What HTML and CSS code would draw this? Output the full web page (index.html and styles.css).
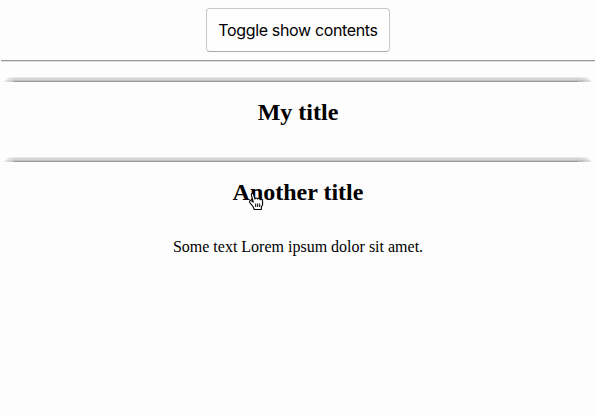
FILE: index.html
```html
<!DOCTYPE html>
<html lang="en">
<head>
<meta charset="utf-8">
<title>Toggle contents</title>
<link rel="stylesheet" href="styles.css">
</head>
<body>
<button class="toggle" type="button">Toggle show contents</button>
<hr class="rule">
<section class="panel">
  <h2 class="title">My title</h2>
</section>
<section class="panel">
  <h2 class="title">Another title</h2>
  <p class="description">Some text Lorem ipsum dolor sit amet.</p>
</section>
<svg class="pointer" width="16" height="20" viewBox="0 0 16 20" aria-hidden="true">
  <path d="M5.2 17.5 4 14.5 1 10.8C-.3 8.8 1.5 7.8 3 9L4.3 10.2 2.4 3.2C1.9 1.2 4 .8 4.6 2.6L6 7C6.4 5.7 8 5.8 8.5 7 9.3 6 10.8 6.4 11.1 7.7 12.2 7 13.5 7.7 13.6 9.2L13.6 12.5 12.4 15.2 12.3 17.5Z" fill="#fff" stroke="#000" stroke-width="1.1" stroke-linejoin="round"/>
  <path d="M6.7 11.5v3.5M8.7 11.5v3.5M10.7 11.5v3.5" stroke="#000" stroke-width="1"/>
</svg>
</body>
</html>
```
FILE: styles.css
```css
body {
  min-height: 407px;
  margin: 0;
  padding-top: 8px;
  background: #fdfdfd;
  color: #000;
  font-family: "Liberation Serif", "Times New Roman", serif;
  font-size: 16px;
  text-align: center;
}

.toggle {
  display: block;
  box-sizing: border-box;
  width: 184px;
  height: 44px;
  margin: 0 auto;
  padding: 0;
  border: 1px solid #c8c8c8;
  border-bottom-color: #aaa;
  border-radius: 4px;
  background: #fefefe;
  color: #000;
  font: 16px/20px Inter, sans-serif;
  letter-spacing: -0.35px;
}

.rule {
  height: 1px;
  margin: 8px 1px 15px;
  border: 0;
  border-top: 1px solid #999;
  background: #e0e0e0;
}

.panel {
  min-height: 80px;
}

.panel::before {
  content: "";
  display: block;
  height: 5px;
  margin: 0 4px;
  background:
    linear-gradient(#999, #999) 10px 4px / calc(100% - 24px) 1px no-repeat,
    linear-gradient(#e9e9e9 1px, #d4d4d4 1px 3px, #c0c0c0 3px 4px, #bdbdbd 4px);
  clip-path: polygon(5px 0, calc(100% - 5px) 0, 100% 100%, 0 100%);
  mask-image: linear-gradient(90deg, rgba(0, 0, 0, 0.3), #000 11px calc(100% - 11px), rgba(0, 0, 0, 0.3));
}

.title {
  margin: 0;
  padding-top: 16px;
  font-size: 24px;
  line-height: 28px;
}

.description {
  margin: 32px 0 0;
  line-height: 18px;
}

.pointer {
  position: absolute;
  left: 249px;
  top: 192px;
}
```
